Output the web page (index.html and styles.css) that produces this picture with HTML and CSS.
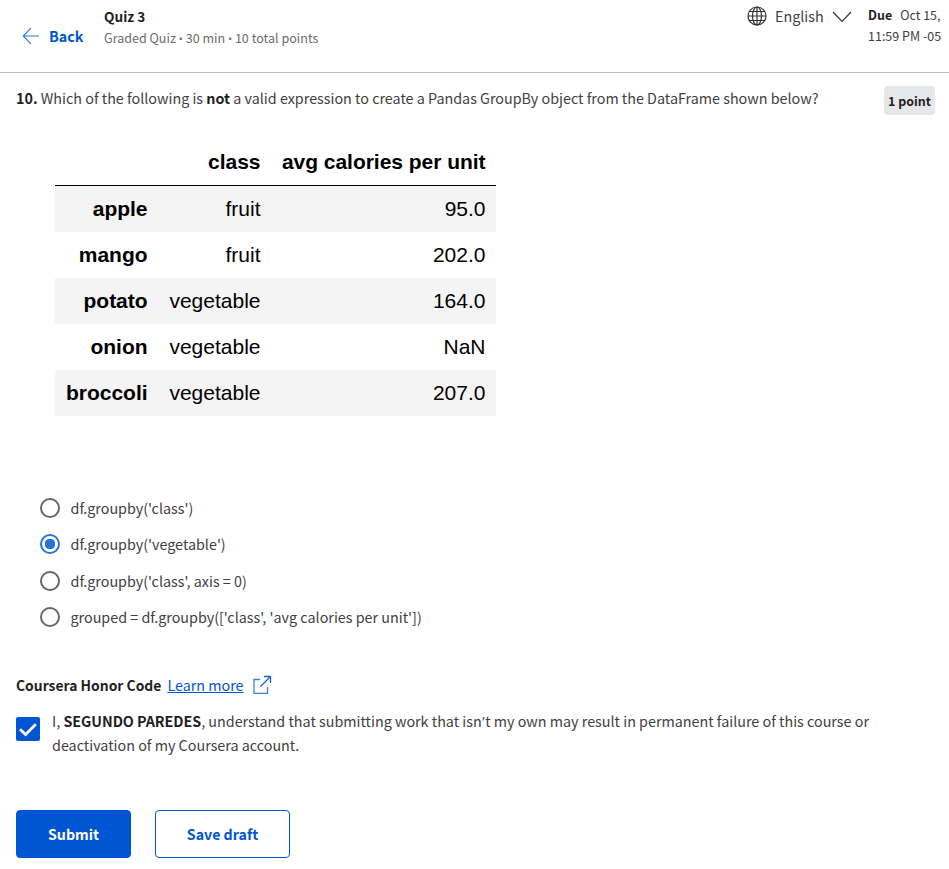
FILE: index.html
```html
<!DOCTYPE html>
<html lang="en">
<head>
<meta charset="utf-8">
<title>Quiz 3</title>
<link rel="stylesheet" href="styles.css">
</head>
<body>
<header class="top">
  <a class="back">
    <svg width="18" height="18" viewBox="0 0 18 18" fill="none" stroke="#2a73e8" stroke-width="1.1"><path d="M17 9H1M9 1.200L1.200 9L9 16.800"/></svg>
    <span class="back-text">Back</span>
  </a>
  <div class="heading">
    <h1 class="title"><span>Quiz 3</span></h1>
    <p class="meta"><span>Graded Quiz <i class="dot">•</i> 30 min <i class="dot">•</i> 10 total points</span></p>
  </div>
  <div class="language">
    <svg width="20" height="20" viewBox="0 0 20 20" fill="none" stroke="#333" stroke-width="1.200"><circle cx="10" cy="10" r="9"/><ellipse cx="10" cy="10" rx="4.500" ry="9"/><path d="M10 1v18M1 10h18M2.500 5.500h15M2.500 14.500h15"/></svg>
    <span class="lang-text">English</span>
    <svg class="chevron" width="20" height="12" viewBox="0 0 20 12" fill="none" stroke="#333" stroke-width="1.200"><path d="M1 1l9 9.500L19 1"/></svg>
  </div>
  <div class="due"><div><b>Due</b><span class="date">Oct 15,</span></div><div class="time"><span>11:59 PM -05</span></div></div>
</header>
<main class="quiz">
  <section class="question">
    <p class="prompt"><span><b>10.</b> Which of the following is <b>not</b> a valid expression to create a Pandas GroupBy object from the DataFrame shown below?</span></p>
    <span class="points">1 point</span>
  </section>
  <table class="frame">
    <thead><tr><th></th><th>class</th><th>avg calories per unit</th></tr></thead>
    <tbody>
      <tr><th>apple</th><td>fruit</td><td>95.0</td></tr>
      <tr><th>mango</th><td>fruit</td><td>202.0</td></tr>
      <tr><th>potato</th><td>vegetable</td><td>164.0</td></tr>
      <tr><th>onion</th><td>vegetable</td><td>NaN</td></tr>
      <tr><th>broccoli</th><td>vegetable</td><td>207.0</td></tr>
    </tbody>
  </table>
  <div class="options">
    <label class="option"><i class="radio"></i><span>df.groupby('class')</span></label>
    <label class="option"><i class="radio checked"></i><span>df.groupby('vegetable')</span></label>
    <label class="option"><i class="radio"></i><span>df.groupby('class', axis = 0)</span></label>
    <label class="option"><i class="radio"></i><span>grouped = df.groupby(['class', 'avg calories per unit'])</span></label>
  </div>
  <div class="honor">
    <b class="honor-title">Coursera Honor Code</b>
    <a class="learn">Learn more</a>
    <svg width="20" height="20" viewBox="0 0 20 20" fill="none" stroke="#3b7fe6" stroke-width="1.300"><path d="M8 4.500H2V18.300H15.500V12"/><path d="M8.500 11.500L18.300 1.700M12 1.500H18.500V8" stroke="#1763dc"/></svg>
  </div>
  <div class="agree">
    <span class="check"><svg width="24" height="24" viewBox="0 0 24 24" fill="none" stroke="#fff" stroke-width="2.800"><path d="M4 12.200L9.600 17.500L19.800 7.200"/></svg></span>
    <p class="pledge"><span>I, <b>SEGUNDO PAREDES</b>, understand that submitting work that isn<i class="apos">’</i>t my own may result in permanent failure of this course or</span><br><span>deactivation of my Coursera account.</span></p>
  </div>
  <div class="actions">
    <button class="btn primary">Submit</button>
    <button class="btn outline">Save draft</button>
  </div>
</main>
</body>
</html>
```
FILE: styles.css
```css
* { box-sizing: border-box; }
body { margin: 0; background: #fff; color: #404040; font: 14.33px/24px "Noto Sans CJK SC", "Open Sans", sans-serif; overflow: hidden; }
h1, p { margin: 0; }
b { color: #1f1f1f; }
svg { display: block; flex: none; }
.top { height: 73px; display: flex; align-items: flex-start; border-bottom: 1px solid #bdbdbd; white-space: nowrap; }
.back { display: flex; align-items: center; gap: 9px; width: 82px; margin: 24px 0 0 22px; color: #0056d2; font-weight: 700; }
.heading { flex: 1; padding-top: 6px; }
.title { font-size: 13.6px; line-height: 20px; color: #1f1f1f; }
.meta { font-size: 12.55px; line-height: 20px; margin-top: 2px; color: #6c6c6c; }
.dot, .apos { font-family: "Open Sans", sans-serif; font-style: normal; line-height: 1; }
.dot { font-size: 11px; }
.apos { margin: 0 0.5px; }
.language { display: flex; width: 121px; padding-top: 6px; }
.lang-text { width: 57px; margin: -2px 0 0 8px; }
.chevron { margin-top: 5px; }
.due { width: 81px; padding-top: 4px; font-size: 12.5px; line-height: 21px; }
.date { margin-left: 8px; }
.quiz { padding: 0 14px 0 16px; }
.question { display: flex; justify-content: space-between; height: 66px; padding-top: 13px; white-space: nowrap; }
.points { width: 51px; height: 29px; border-radius: 4px; background: #e5e7e8; color: #1f1f1f; font-weight: 700; font-size: 12.4px; line-height: 31px; text-align: center; }
.frame { width: 441px; margin-left: 39px; border-collapse: collapse; table-layout: fixed; color: #000; font: 21px/46px "Liberation Sans", sans-serif; }
.frame th, .frame td { padding: 0 10.500px 0 0; height: 46px; text-align: right; white-space: nowrap; }
.frame th { letter-spacing: -0.03px; }
.frame th:first-child { width: 103px; }
.frame th:nth-child(2) { width: 113px; }
.frame thead th { line-height: 44px; border-bottom: 1px solid #000; }
.frame tbody tr:nth-child(odd) { background: #f4f4f4; }
.options { margin: 74px 0 0 24px; }
.option { display: flex; align-items: center; gap: 10.500px; height: 36px; }
.option:nth-child(2) { height: 37px; }
.radio { width: 20px; height: 20px; flex: none; border: 2px solid #666; border-radius: 50%; }
.checked { border-color: #2a73d0; background: radial-gradient(circle, #2a73d0 5px, #fff 5.500px); }
.honor { display: flex; align-items: center; margin-top: 38.600px; }
.honor-title { font-size: 13.9px; }
.learn { color: #0056d2; text-decoration: underline; margin: 0 8px 0 6px; }
.agree { display: flex; gap: 12px; margin-top: 12px; white-space: nowrap; }
.pledge b { letter-spacing: -0.05px; }
.check { width: 24px; height: 24px; margin-top: 8px; background: #0056d2; border-radius: 2px; }
.actions { display: flex; gap: 24px; margin-top: 53px; }
.btn { height: 48px; padding: 0; border: 1px solid #0056d2; border-radius: 4px; font: 700 14.2px/46px "Noto Sans CJK SC", sans-serif; }
.primary { width: 115px; background: #0056d2; color: #fff; }
.outline { width: 135px; background: #fff; color: #0056d2; }
```
